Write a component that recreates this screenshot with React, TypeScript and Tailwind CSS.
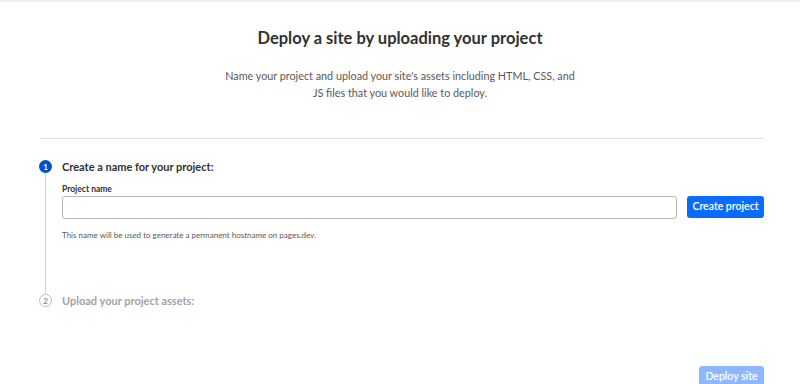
import React from 'react';

const font = { fontFamily: 'Lato, "Open Sans", sans-serif' };

function StepBadge({ n, active }: { n: number; active: boolean }) {
  return (
    <div
      className={`flex h-[13px] w-[13px] shrink-0 items-center justify-center rounded-full text-[8px] font-bold leading-none ${
        active ? 'bg-[#0051c3] text-white' : 'border border-[#bdbdbd] bg-white text-[#8a8a8a]'
      }`}
    >
      {n}
    </div>
  );
}

export default function App() {
  return (
    <div className="h-[384px] w-[800px] overflow-hidden bg-white" style={font}>
      <div className="h-[2px] w-full bg-[#efefef]" />
      <div className="flex flex-col items-center pt-[25px]">
        <h1 className="text-[16.5px] font-bold leading-[22px] text-[#313131]">
          Deploy a site by uploading your project
        </h1>
        <p className="mt-[18px] text-center text-[10.8px] leading-[17px] text-[#595959]">
          Name your project and upload your site's assets including HTML, CSS, and
          <br />
          JS files that you would like to deploy.
        </p>
      </div>
      <div className="ml-[40px] mr-[36px] mt-[37px] h-px bg-[#e2e2e2]" />

      <div className="ml-[39px] mr-[36px] pt-[21px]">
        {/* step 1 */}
        <div className="flex">
          <div className="flex w-[13px] flex-col items-center">
            <StepBadge n={1} active />
            <div className="h-[121px] w-px bg-[#d0d0d0]" />
          </div>
          <div className="ml-[10px] flex-1">
            <div className="text-[11px] font-bold leading-[13px] text-[#313131]">
              Create a name for your project:
            </div>
            <div className="mt-[10px] text-[8.5px] font-bold leading-[12px] text-[#313131]">
              Project name
            </div>
            <div className="mt-[1px] flex gap-[10px]">
              <input
                className="h-[23px] flex-1 rounded-[3px] border border-[#b7b7b7] bg-white px-2 text-[11px] outline-none"
                type="text"
              />
              <button className="h-[22px] w-[77px] rounded-[3px] bg-[#0a6cff] text-[10.5px] font-semibold text-white">
                Create project
              </button>
            </div>
            <div className="mt-[10px] text-[8px] leading-[12px] text-[#595959]">
              This name will be used to generate a permanent hostname on pages.dev.
            </div>
          </div>
        </div>

        {/* step 2 */}
        <div className="flex items-center">
          <StepBadge n={2} active={false} />
          <div className="ml-[10px] text-[11px] font-bold leading-[13px] text-[#a3a3a3]">
            Upload your project assets:
          </div>
        </div>

        <div className="mt-[59px] flex justify-end">
          <button className="h-[22px] w-[65px] rounded-[3px] bg-[#8db8ff] text-[10.5px] font-semibold text-white">
            Deploy site
          </button>
        </div>
      </div>
    </div>
  );
}
